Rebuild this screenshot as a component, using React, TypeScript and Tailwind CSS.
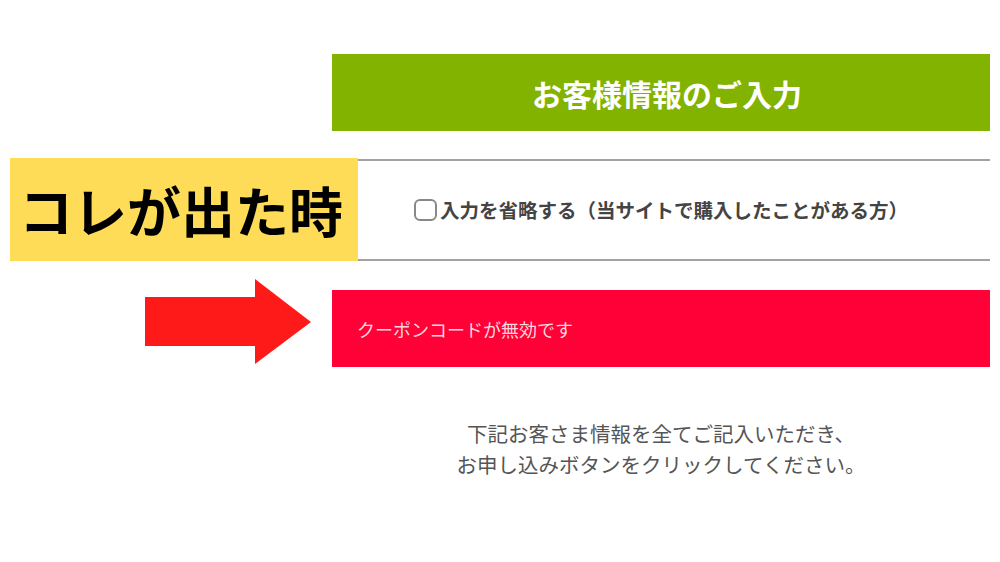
const jp = { fontFamily: '"Noto Sans CJK JP", "Noto Sans", sans-serif' };

function Arrow() {
  return (
    <svg width="166" height="85" viewBox="0 0 166 85" className="absolute left-[145px] top-[279px]">
      <polygon points="0,18 110,18 110,0 166,43 110,85 110,67 0,67" fill="#ff1a1a" />
    </svg>
  );
}

export default function App() {
  return (
    <div className="relative h-[562px] w-[1000px] overflow-hidden bg-white" style={jp}>
      <div className="ml-[332px] flex w-[658px] flex-col pt-[54px]">
        <div className="flex h-[77px] items-center justify-center bg-[#82b300]">
          <h1 className="pl-[12px] text-[30px] font-bold leading-none text-white">お客様情報のご入力</h1>
        </div>

        <div className="mt-[28px] flex h-[102px] items-center justify-center border-y-2 border-[#a3a3a3]">
          <label className="flex items-center text-[19.5px] font-bold text-[#444]">
            <span className="mr-[3px] h-[22px] w-[23px] rounded-[6px] border-2 border-[#888] bg-white" />
            入力を省略する（当サイトで購入したことがある方）
          </label>
        </div>

        <div className="mt-[29px] flex h-[77px] items-center bg-[#ff0037] pl-[25px]">
          <p className="text-[18px] leading-none text-[#ffd6de]">クーポンコードが無効です</p>
        </div>

        <div className="mt-[51px] text-center text-[20.5px] leading-[31px] text-[#555]">
          <p>下記お客さま情報を全てご記入いただき、</p>
          <p>お申し込みボタンをクリックしてください。</p>
        </div>
      </div>

      <div className="absolute left-[10px] top-[158px] flex h-[103px] w-[348px] items-center justify-center bg-[#ffdc58]">
        <span className="pr-[6px] text-[54px] font-bold leading-none text-black">コレが出た時</span>
      </div>
      <Arrow />
    </div>
  );
}
